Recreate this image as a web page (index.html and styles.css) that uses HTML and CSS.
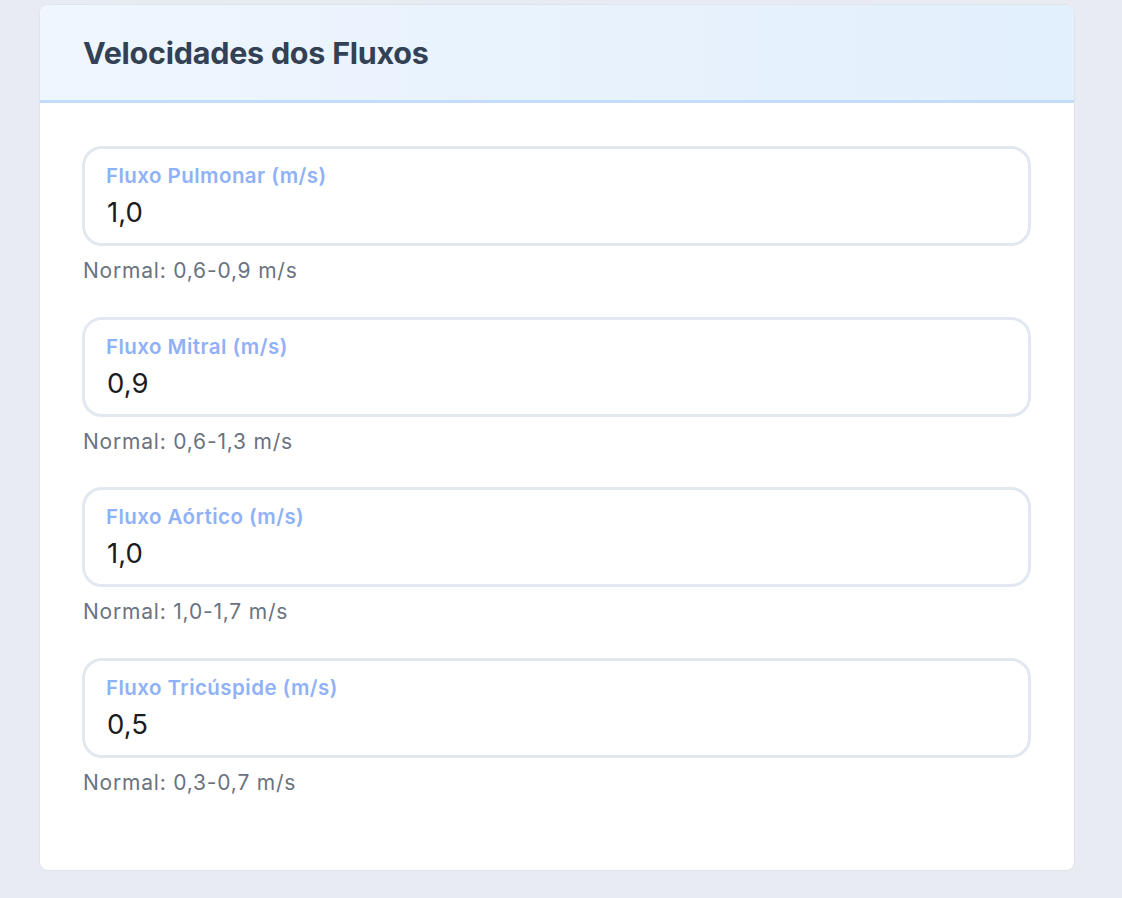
FILE: index.html
```html
<!DOCTYPE html>
<html lang="pt">
<head>
<meta charset="utf-8">
<title>Velocidades dos Fluxos</title>
<link rel="stylesheet" href="styles.css">
</head>
<body>
<main class="page">
  <section class="card">
    <header class="card-header">
      <h2 class="card-title">Velocidades dos Fluxos</h2>
    </header>
    <div class="card-body">
      <div class="field">
        <label class="field-box">
          <span class="field-label">Fluxo Pulmonar (m/s)</span>
          <input class="field-input" type="text" value="1,0">
        </label>
        <p class="field-hint">Normal: 0,6-0,9 m/s</p>
      </div>
      <div class="field">
        <label class="field-box">
          <span class="field-label">Fluxo Mitral (m/s)</span>
          <input class="field-input" type="text" value="0,9">
        </label>
        <p class="field-hint">Normal: 0,6-1,3 m/s</p>
      </div>
      <div class="field">
        <label class="field-box">
          <span class="field-label">Fluxo Aórtico (m/s)</span>
          <input class="field-input" type="text" value="1,0">
        </label>
        <p class="field-hint">Normal: 1,0-1,7 m/s</p>
      </div>
      <div class="field">
        <label class="field-box">
          <span class="field-label">Fluxo Tricúspide (m/s)</span>
          <input class="field-input" type="text" value="0,5">
        </label>
        <p class="field-hint">Normal: 0,3-0,7 m/s</p>
      </div>
    </div>
  </section>
</main>
</body>
</html>
```

FILE: styles.css
```css
* { box-sizing: border-box; }

html, body {
  margin: 0;
  padding: 0;
  background: #e8ebf2;
  font-family: Inter, "Noto Sans", "Liberation Sans", sans-serif;
}

.page {
  padding: 4px 47px 28px 39px;
}

.card {
  width: 1036px;
  background: #ffffff;
  border: 1px solid #dfe3ea;
  border-radius: 9px;
  overflow: hidden;
}

.card-header {
  height: 98px;
  padding: 0 43px;
  display: flex;
  align-items: center;
  background: linear-gradient(90deg, #eff6fe 0%, #e2effc 100%);
  border-bottom: 3px solid #c2dcfa;
}

.card-title {
  margin: 0;
  font-size: 30.5px;
  font-weight: 700;
  color: #334155;
  letter-spacing: -0.25px;
}

.card-body {
  padding: 43px 43px 41px 42px;
  display: flex;
  flex-direction: column;
}

.field {
  display: flex;
  flex-direction: column;
  margin-bottom: 33.67px;
}

.field-box {
  display: flex;
  flex-direction: column;
  height: 100px;
  padding: 14px 20px 0 21px;
  border: 3px solid #e2e8f0;
  border-radius: 20px;
  background: #ffffff;
}

.field-label {
  font-size: 20.5px;
  font-weight: 600;
  color: #8fb1f7;
  line-height: 26px;
  letter-spacing: 0.45px;
}

.field-input {
  border: 0;
  outline: 0;
  padding: 0;
  margin: 6px 0 0 1px;
  font-family: inherit;
  font-size: 27.5px;
  color: #1c1c1e;
  background: transparent;
  line-height: 34px;
  height: 34px;
}

.field-hint {
  margin: 13px 0 0 1px;
  font-size: 21px;
  line-height: 24px;
  color: #6b7280;
  letter-spacing: 0.8px;
}
```
